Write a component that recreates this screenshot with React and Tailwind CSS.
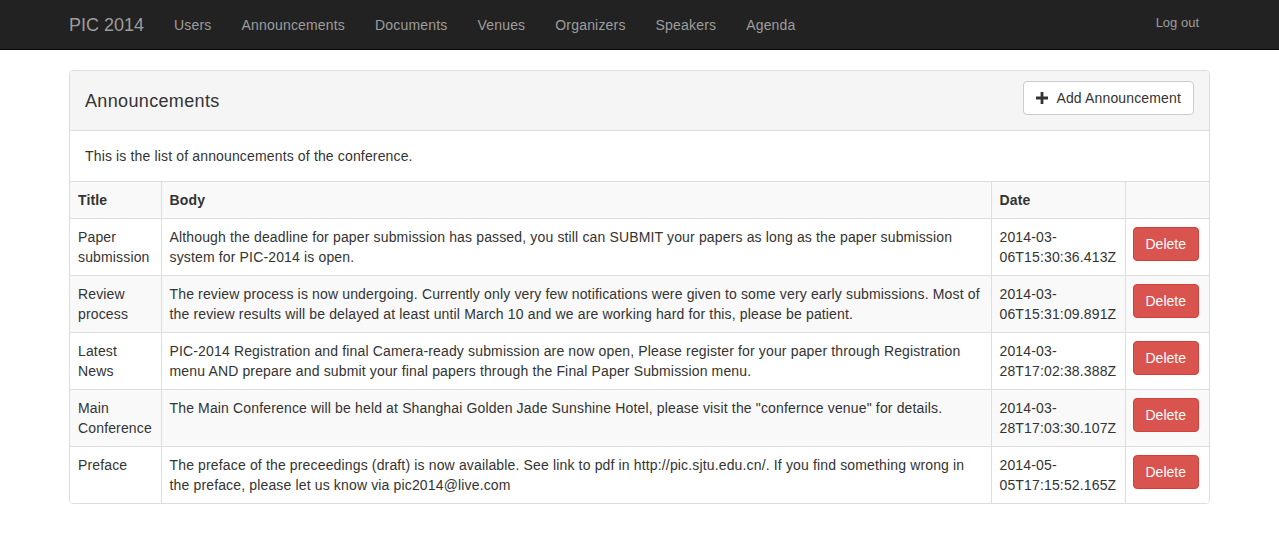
const NAV = ['Users', 'Announcements', 'Documents', 'Venues', 'Organizers', 'Speakers', 'Agenda']

const ROWS = [
  {
    title: ['Paper', 'submission'],
    body: [
      'Although the deadline for paper submission has passed, you still can SUBMIT your papers as long as the paper submission',
      'system for PIC-2014 is open.',
    ],
    date: ['2014-03-', '06T15:30:36.413Z'],
  },
  {
    title: ['Review', 'process'],
    body: [
      'The review process is now undergoing. Currently only very few notifications were given to some very early submissions. Most of',
      'the review results will be delayed at least until March 10 and we are working hard for this, please be patient.',
    ],
    date: ['2014-03-', '06T15:31:09.891Z'],
  },
  {
    title: ['Latest', 'News'],
    body: [
      'PIC-2014 Registration and final Camera-ready submission are now open, Please register for your paper through Registration',
      'menu AND prepare and submit your final papers through the Final Paper Submission menu.',
    ],
    date: ['2014-03-', '28T17:02:38.388Z'],
  },
  {
    title: ['Main', 'Conference'],
    body: [
      'The Main Conference will be held at Shanghai Golden Jade Sunshine Hotel, please visit the "confernce venue" for details.',
    ],
    date: ['2014-03-', '28T17:03:30.107Z'],
  },
  {
    title: ['Preface'],
    body: [
      'The preface of the preceedings (draft) is now available. See link to pdf in http://pic.sjtu.edu.cn/. If you find something wrong in',
      'the preface, please let us know via pic2014@live.com',
    ],
    date: ['2014-05-', '05T17:15:52.165Z'],
  },
]

function Lines({ items }) {
  return items.map((t, i) => (
    <span key={i} className="block whitespace-nowrap">{t}</span>
  ))
}

function PlusIcon() {
  return (
    <svg width="12" height="12" viewBox="0 0 12 12" className="shrink-0">
      <path d="M4.6 0h2.8v4.6H12v2.8H7.4V12H4.6V7.4H0V4.6h4.6z" fill="#333" />
    </svg>
  )
}

export default function App() {
  return (
    <div className="min-h-[550px] bg-white text-[14px] leading-[20px] text-[#333]" style={{ fontFamily: '"Liberation Sans", Arial, sans-serif' }}>
      <nav className="h-[50px] bg-[#222] border-b border-[#080808]">
        <div className="w-[1171px] mx-auto px-[15px] flex h-full">
          <a className="text-[18px] leading-[20px] text-[#9d9d9d] pt-[15px] pr-[15px]">PIC 2014</a>
          <ul className="flex tracking-[0.18px]">
            {NAV.map((n) => (
              <li key={n} className="px-[15px] pt-[15px] text-[#9d9d9d]">{n}</li>
            ))}
          </ul>
          <a className="ml-auto mr-[11px] pt-[13px] text-[13px] text-[#9d9d9d]">Log out</a>
        </div>
      </nav>

      <div className="w-[1171px] mx-auto px-[15px] mt-5 tracking-[0.15px]">
        <div className="border border-[#ddd] rounded-[4px] overflow-hidden">
          <div className="h-[60px] bg-[#f5f5f5] border-b border-[#ddd] px-[15px] flex items-center">
            <h3 className="text-[18px] font-medium text-[#333] tracking-[0.35px]">Announcements</h3>
            <button className="ml-auto self-start mt-[10px] h-[34px] px-[12px] border border-[#ccc] rounded-[4px] bg-white flex items-center gap-[8px] text-[#333]">
              <PlusIcon />
              <span>Add Announcement</span>
            </button>
          </div>
          <div className="px-[15px] py-[15px] border-b border-[#ddd]">
            This is the list of announcements of the conference.
          </div>
          <table className="w-full table-fixed border-collapse">
            <colgroup>
              <col className="w-[91px]" />
              <col className="w-[830px]" />
              <col className="w-[134px]" />
              <col />
            </colgroup>
            <thead>
              <tr className="bg-[#f9f9f9] text-left">
                <th className="p-[8px] border-r border-[#ddd] font-bold">Title</th>
                <th className="p-[8px] border-r border-[#ddd] font-bold">Body</th>
                <th className="p-[8px] border-r border-[#ddd] font-bold">Date</th>
                <th className="p-[8px]"></th>
              </tr>
            </thead>
            <tbody>
              {ROWS.map((r, i) => (
                <tr key={i} className={i % 2 === 1 ? 'bg-[#f9f9f9]' : 'bg-white'}>
                  <td className="p-[8px] align-top border-t border-r border-[#ddd]"><Lines items={r.title} /></td>
                  <td className="p-[8px] align-top border-t border-r border-[#ddd]"><Lines items={r.body} /></td>
                  <td className="p-[8px] align-top border-t border-r border-[#ddd]"><Lines items={r.date} /></td>
                  <td className="p-[8px] pl-[7px] align-top border-t border-[#ddd]">
                    <button className="h-[34px] px-[12px] rounded-[4px] bg-[#d9534f] border border-[#d43f3a] text-white tracking-normal">Delete</button>
                  </td>
                </tr>
              ))}
            </tbody>
          </table>
        </div>
      </div>
    </div>
  )
}
